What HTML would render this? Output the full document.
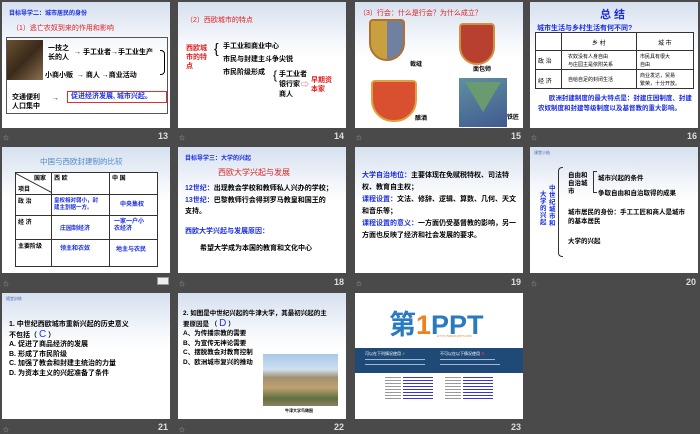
<!DOCTYPE html>
<html><head><meta charset="utf-8"><style>
*{margin:0;padding:0;box-sizing:border-box}
body{width:700px;height:431px;background:#4a4a4a;position:relative;overflow:hidden;font-family:"Liberation Sans","Noto Sans CJK SC",sans-serif}
.s{position:absolute;width:168px;height:126px;background:linear-gradient(#d6e0ef 0%,#f4f7fb 30%,#fff 45%);overflow:hidden}
.s>*{position:absolute;white-space:nowrap}
.n{position:absolute;color:#ddd;font-size:9px;font-weight:bold}
.m{position:absolute;color:#aaa;font-size:6px}
.b{color:#000;font-weight:bold;font-size:7px}
.bl{color:#1a2ee0;font-weight:bold}
.r{color:#e02020}
</style></head><body>

<!-- slide 13 -->
<div class="s" style="left:2px;top:2px">
<div class="bl" style="left:7px;top:6px;font-size:6px">目标导学二：城市居民的身份</div>
<div class="r" style="left:10px;top:21px;font-size:7px">（1）逃亡农奴到来的作用和影响</div>
<div style="left:4px;top:35px;width:162px;height:77px;border:1px solid #555"></div>
<div style="left:5px;top:38px;width:36px;height:40px;background:linear-gradient(135deg,#6a5030,#3a2a1a,#8a7050)"></div>
<div class="b" style="left:46px;top:42px;line-height:9px">一技之<br>长的人</div>
<div class="b" style="left:72px;top:45px">→ 手工业者→手工业生产</div>
<div class="b" style="left:43px;top:68px">小商小贩 &nbsp;→ 商人 →商业活动</div>
<div style="left:158px;top:48px;width:5px;height:25px;border:1px solid #000;border-left:none;border-radius:0 4px 4px 0"></div>
<div class="b" style="left:10px;top:91px;line-height:9px">交通便利<br>人口集中</div>
<div class="b" style="left:50px;top:93px">→</div>
<div class="bl" style="left:65px;top:89px;width:100px;height:12px;border:1px solid #e03030;font-size:7px;line-height:10px;padding-left:3px">促进经济发展, 城市兴起。</div>
</div>
<div class="m" style="left:3px;top:133px">☆</div><div class="n" style="left:158px;top:131px">13</div>

<!-- slide 14 -->
<div class="s" style="left:178px;top:2px">
<div class="r" style="left:8px;top:13px;font-size:7px">（2）西欧城市的特点</div>
<div class="r" style="left:8px;top:42px;font-size:7px;font-weight:bold;line-height:9px">西欧城<br>市的特<br>点</div>
<div class="b" style="left:36px;top:38px;font-size:14px;font-weight:normal">{</div>
<div class="b" style="left:45px;top:38px;line-height:13px">手工业和商业中心<br>市民与封建主斗争尖锐<br>市民阶级形成</div>
<div class="b" style="left:95px;top:66px;font-size:12px;font-weight:normal">{</div>
<div class="b" style="left:101px;top:68px;line-height:10px">手工业者<br>银行家<br>商人</div>
<div class="r" style="left:123px;top:77px;font-size:8px">⇨</div>
<div class="r" style="left:133px;top:74px;font-size:7px;font-weight:bold;line-height:9px">早期资<br>本家</div>
</div>
<div class="m" style="left:179px;top:133px">☆</div><div class="n" style="left:334px;top:131px">14</div>

<!-- slide 15 -->
<div class="s" style="left:355px;top:2px">
<div class="r" style="left:4px;top:6px;font-size:7px">（3）行会：什么是行会？为什么成立？</div>
<div style="left:14px;top:17px;width:36px;height:42px;background:linear-gradient(90deg,#c8a040 50%,#7080a0 50%);border-radius:4px 4px 18px 18px;border:2px solid #b07030"></div>
<div class="b" style="left:55px;top:57px;font-size:6px">裁缝</div>
<div style="left:104px;top:21px;width:36px;height:42px;background:#b84030;border-radius:4px 4px 18px 18px;border:2px solid #d09040"></div>
<div class="b" style="left:118px;top:62px;font-size:6px">面包师</div>
<div style="left:16px;top:78px;width:46px;height:42px;background:#d85030;border-radius:4px 4px 22px 22px;border:2px solid #e0a040"></div>
<div class="b" style="left:60px;top:111px;font-size:6px">酿酒</div>
<div style="left:104px;top:76px;width:48px;height:49px;background:linear-gradient(160deg,#6090a0,#405a90)"></div>
<div style="left:110px;top:80px;width:0;height:0;border-left:18px solid transparent;border-right:18px solid transparent;border-top:30px solid #6a9a70"></div>
<div class="b" style="left:152px;top:110px;font-size:6px">铁匠</div>
</div>
<div class="m" style="left:356px;top:133px">☆</div><div class="n" style="left:511px;top:131px">15</div>

<!-- slide 16 -->
<div class="s" style="left:530px;top:2px">
<div class="bl" style="left:70px;top:4px;font-size:11px">总 结</div>
<div class="bl" style="left:7px;top:21px;font-size:7px">城市生活与乡村生活有何不同?</div>
<div style="left:5px;top:30px;width:159px;height:57px;border:1px solid #333;background:#fff"></div>
<div style="left:5px;top:48px;width:159px;height:1px;background:#333"></div>
<div style="left:5px;top:67px;width:159px;height:1px;background:#333"></div>
<div style="left:31px;top:30px;width:1px;height:57px;background:#333"></div>
<div style="left:106px;top:30px;width:1px;height:57px;background:#333"></div>
<div style="left:62px;top:36px;font-size:6px">乡 村</div>
<div style="left:128px;top:36px;font-size:6px">城 市</div>
<div style="left:8px;top:54px;font-size:6px">政 治</div>
<div style="left:38px;top:51px;font-size:5px;line-height:8px">农奴没有人身自由<br>与庄园主是依附关系</div>
<div style="left:110px;top:51px;font-size:5px;line-height:8px">市民具有很大<br>自由</div>
<div style="left:8px;top:74px;font-size:6px">经 济</div>
<div style="left:38px;top:74px;font-size:5px">自给自足的封闭生活</div>
<div style="left:110px;top:70px;font-size:5px;line-height:8px">商业发达，贸易<br>繁荣，十分开放。</div>
<div class="bl" style="left:8px;top:92px;font-size:6.5px;line-height:10px;white-space:normal;width:156px">&nbsp;&nbsp;&nbsp;&nbsp;&nbsp;&nbsp;欧洲封建制度的最大特点是：封建庄园制度、封建农奴制度和封建等级制度以及基督教的重大影响。</div>
</div>
<div class="m" style="left:531px;top:133px">☆</div><div class="n" style="left:687px;top:131px">16</div>

<!-- slide 17 -->
<div class="s" style="left:2px;top:147px">
<div style="left:38px;top:9px;font-size:7.5px;color:#4a8ac8">中国与西欧封建制的比较</div>
<div style="left:13px;top:25px;width:143px;height:95px;border:1px solid #333;background:#fff"></div>
<div style="left:49px;top:25px;width:1px;height:95px;background:#333"></div>
<div style="left:107px;top:25px;width:1px;height:95px;background:#333"></div>
<div style="left:13px;top:47px;width:143px;height:1px;background:#333"></div>
<div style="left:13px;top:68px;width:143px;height:1px;background:#333"></div>
<div style="left:13px;top:92px;width:143px;height:1px;background:#333"></div>
<div style="left:14px;top:26px;width:41px;height:1px;background:#333;transform:rotate(28deg);transform-origin:0 0"></div>
<div class="b" style="left:32px;top:26px;font-size:6px">国家</div><div class="b" style="left:16px;top:37px;font-size:6px">项目</div>
<div class="b" style="left:52px;top:26px;font-size:6px">西 欧</div><div class="b" style="left:110px;top:26px;font-size:6px">中 国</div>
<div class="b" style="left:16px;top:49px;font-size:6px">政 治</div>
<div class="bl" style="left:52px;top:51px;font-size:5.5px;line-height:7px">皇权相对弱小，封<br>建主割据一方。</div>
<div class="bl" style="left:118px;top:52px;font-size:6px">中央集权</div>
<div class="b" style="left:16px;top:70px;font-size:6px">经 济</div>
<div class="bl" style="left:58px;top:76px;font-size:6px">庄园制经济</div>
<div class="bl" style="left:112px;top:72px;font-size:6px;line-height:7px">一家一户小<br>农经济</div>
<div class="b" style="left:16px;top:94px;font-size:6px">主要阶级</div>
<div class="bl" style="left:58px;top:96px;font-size:6px">领主和农奴</div>
<div class="bl" style="left:114px;top:97px;font-size:6px">地主与农民</div>
</div>
<div class="m" style="left:3px;top:279px">☆</div><div style="position:absolute;left:157px;top:277px;width:12px;height:8px;background:#eee;border:1px solid #999"></div>

<!-- slide 18 -->
<div class="s" style="left:178px;top:147px">
<div class="bl" style="left:7px;top:6px;font-size:6px">目标导学三：大学的兴起</div>
<div class="r" style="left:40px;top:20px;font-size:8px">西欧大学兴起与发展</div>
<div class="b" style="left:7px;top:36px;font-size:7px"><span class="bl">12世纪：</span>出现教会学校和教师私人兴办的学校；</div>
<div class="b" style="left:7px;top:48px;font-size:7px"><span class="bl">13世纪：</span>巴黎教师行会得到罗马教皇和国王的</div>
<div class="b" style="left:7px;top:59px;font-size:7px">支持。</div>
<div class="bl" style="left:7px;top:79px;font-size:7px">西欧大学兴起与发展原因：</div>
<div class="b" style="left:22px;top:96px;font-size:7px">希望大学成为本国的教育和文化中心</div>
</div>
<div class="m" style="left:179px;top:279px">☆</div><div class="n" style="left:334px;top:277px">18</div>

<!-- slide 19 -->
<div class="s" style="left:355px;top:147px">
<div class="b" style="left:7px;top:23px;font-size:7px;line-height:12px;white-space:normal;width:156px"><span class="bl">大学自治地位：</span>主要体现在免赋税特权、司法特权、教育自主权；<br><span class="bl">课程设置：</span>文法、修辞、逻辑、算数、几何、天文和音乐等；<br><span class="bl">课程设置的意义：</span>一方面仍受基督教的影响，另一方面也反映了经济和社会发展的要求。</div>
</div>
<div class="m" style="left:356px;top:279px">☆</div><div class="n" style="left:511px;top:277px">19</div>

<!-- slide 20 -->
<div class="s" style="left:530px;top:147px">
<div style="left:4px;top:3px;font-size:4px;color:#4a6ab0">课堂小结</div>
<div class="bl" style="left:10px;top:44px;font-size:6.5px;line-height:7px;white-space:normal;width:8px">大学的兴起</div>
<div class="bl" style="left:19px;top:38px;font-size:6.5px;line-height:7px;white-space:normal;width:8px">中世纪城市和</div>
<div class="b" style="left:28px;top:20px;width:5px;height:90px;border:1px solid #333;border-right:none;border-radius:4px 0 0 4px"></div>
<div class="b" style="left:38px;top:25px;font-size:6.5px;line-height:8px">自由和<br>自治城<br>市</div>
<div class="b" style="left:63px;top:24px;width:4px;height:22px;border:1px solid #333;border-right:none"></div>
<div class="b" style="left:68px;top:25px;font-size:6.5px">城市兴起的条件</div>
<div class="b" style="left:68px;top:40px;font-size:6.5px">争取自由和自治取得的成果</div>
<div class="b" style="left:38px;top:61px;font-size:6.5px;line-height:9px">城市居民的身份：手工工匠和商人是城市<br>的基本居民</div>
<div class="b" style="left:38px;top:88px;font-size:6.5px">大学的兴起</div>
</div>
<div class="m" style="left:531px;top:279px">☆</div><div class="n" style="left:686px;top:277px">20</div>

<!-- slide 21 -->
<div class="s" style="left:2px;top:293px">
<div style="left:4px;top:3px;font-size:4px;color:#4a6ab0">随堂训练</div>
<div class="b" style="left:7px;top:27px;font-size:7px;line-height:9.5px">1. 中世纪西欧城市重新兴起的历史意义<br>不包括（ <span style="color:#2030ff;font-size:10px;font-weight:normal">C</span> ）<br>A. 促进了商品经济的发展<br>B. 形成了市民阶级<br>C. 加强了教会和封建主统治的力量<br>D. 为资本主义的兴起准备了条件</div>
</div>
<div class="m" style="left:3px;top:425px">☆</div><div class="n" style="left:158px;top:422px">21</div>

<!-- slide 22 -->
<div class="s" style="left:178px;top:293px">
<div class="b" style="left:5px;top:16px;font-size:6.5px;line-height:9.5px">2. 如图是中世纪兴起的牛津大学，其最初兴起的主<br>要原因是 （ <span style="color:#2030ff;font-size:10px;font-weight:normal">D</span> ）<br>A、为传播宗教的需要<br>B、为宣传无神论需要<br>C、摆脱教会对教育控制<br>D、欧洲城市复兴的推动</div>
<div style="left:85px;top:61px;width:75px;height:52px;background:linear-gradient(#a8c8e8 0%,#d0e0f0 30%,#a09070 45%,#c0a070 65%,#607040 85%,#8a8060 100%)"></div>
<div class="b" style="left:107px;top:115px;font-size:4px">牛津大学鸟瞰图</div>
</div>
<div class="m" style="left:179px;top:425px">☆</div><div class="n" style="left:334px;top:422px">22</div>

<!-- slide 23 -->
<div class="s" style="left:355px;top:293px;background:#fff">
<div style="left:34px;top:10px;font-size:27px;font-weight:bold;color:#2a7ac0;letter-spacing:0px">第<span style="color:#f08020">1</span>PPT</div>
<div style="left:82px;top:41px;font-size:3px;color:#f08020">HTTP://WWW.1PPT.COM</div>
<div style="left:0;top:55px;width:168px;height:25px;background:#1f4a78"></div>
<div style="left:10px;top:58px;font-size:4px;color:#fff">可以在下列情况使用 <span style="color:#6c4">✔</span></div>
<div style="left:85px;top:58px;font-size:4px;color:#fff">不可以在以下情况使用 <span style="color:#e33">✘</span></div>
<div style="left:10px;top:66px;width:60px;height:1px;background:#a0b8d8"></div>
<div style="left:10px;top:71px;width:60px;height:1px;background:#a0b8d8"></div>
<div style="left:85px;top:66px;width:55px;height:1px;background:#a0b8d8"></div>
<div style="left:85px;top:71px;width:60px;height:1px;background:#a0b8d8"></div>
<div style="left:30px;top:84px;width:16px;height:24px;background:repeating-linear-gradient(#999 0 1px,#fff 1px 3px)"></div>
<div style="left:48px;top:84px;width:30px;height:24px;background:repeating-linear-gradient(#33e 0 1px,#fff 1px 3px)"></div>
<div style="left:90px;top:84px;width:16px;height:24px;background:repeating-linear-gradient(#999 0 1px,#fff 1px 3px)"></div>
<div style="left:108px;top:84px;width:30px;height:24px;background:repeating-linear-gradient(#33e 0 1px,#fff 1px 3px)"></div>
</div>
<div class="n" style="left:511px;top:422px">23</div>

</body></html>
